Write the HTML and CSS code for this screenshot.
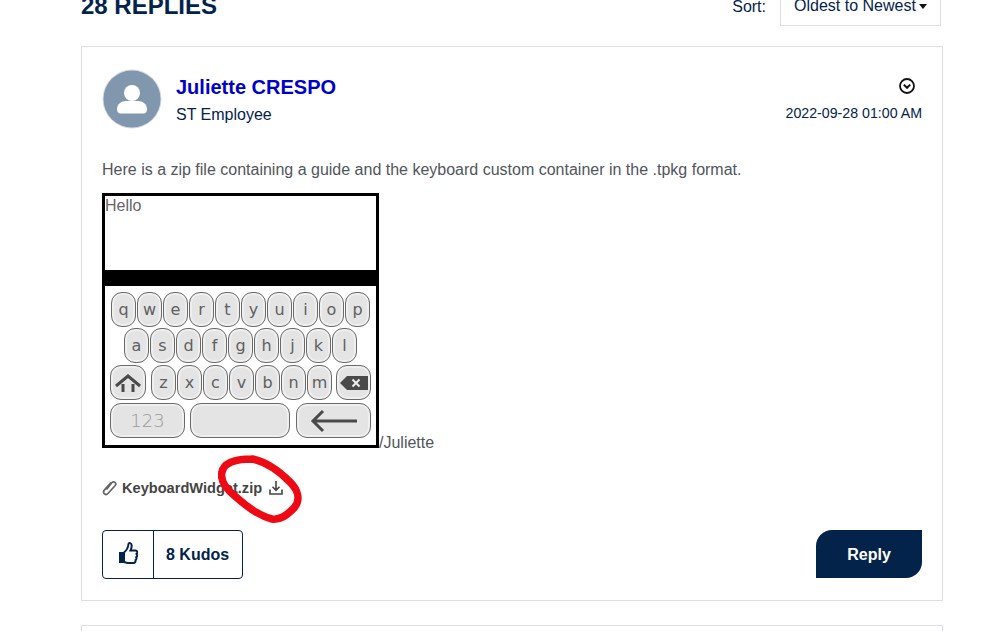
FILE: index.html
```html
<!DOCTYPE html>
<html lang="en">
<head>
    <meta charset="UTF-8">
    <title>28 Replies</title>
    <link rel="stylesheet" href="styles.css">
</head>
<body>
    <div class="page">
        <div class="replies-bar">
            <h2 class="replies-title">28 REPLIES</h2>
            <div class="sort">
                <span class="sort-label">Sort:</span>
                <div class="sort-select">Oldest to Newest<span class="caret"></span></div>
            </div>
        </div>

        <div class="post">
            <div class="post-head">
                <div class="avatar">
                    <svg width="60" height="60" viewBox="0 0 60 60">
                        <circle cx="30" cy="30" r="29.500" fill="#d5dbe2"/>
                        <circle cx="30" cy="30" r="28.500" fill="#8197ad"/>
                        <circle cx="30" cy="24" r="8" fill="#fff"/>
                        <path d="M15 40c0-5 4.500-8 9-8h12c4.500 0 9 3 9 8 0 3-1.500 4.500-3.500 4.500h-23C16.500 44.500 15 43 15 40z" fill="#fff"/>
                    </svg>
                </div>
                <div class="author">
                    <a class="author-name">Juliette CRESPO</a>
                    <div class="author-rank">ST Employee</div>
                </div>
                <div class="post-meta">
                    <svg class="menu-icon" width="16" height="16" viewBox="0 0 16 16" fill="none" stroke="#111" stroke-width="1.800">
                        <circle cx="8" cy="8" r="7"/>
                        <path d="M4.800 6.600 8 9.800l3.200-3.200" stroke-width="2"/>
                    </svg>
                    <div class="post-date">2022-09-28 01:00 AM</div>
                </div>
            </div>

            <p class="post-text">Here is a zip file containing a guide and the keyboard custom container in the .tpkg format.</p>

            <div class="post-shot">
                <div class="phone">
                    <div class="phone-input">Hello</div>
                    <div class="phone-band"></div>
                    <div class="keyboard">
                        <div class="key-row">
                            <span class="key">q</span><span class="key">w</span><span class="key">e</span><span class="key">r</span><span class="key">t</span><span class="key">y</span><span class="key">u</span><span class="key">i</span><span class="key">o</span><span class="key">p</span>
                        </div>
                        <div class="key-row row-a">
                            <span class="key">a</span><span class="key">s</span><span class="key">d</span><span class="key">f</span><span class="key">g</span><span class="key">h</span><span class="key">j</span><span class="key">k</span><span class="key">l</span>
                        </div>
                        <div class="key-row row-z">
                            <span class="key key-shift">
                                <svg width="28" height="20" viewBox="0 0 28 20" fill="none" stroke="#4a4a4a" stroke-width="3">
                                    <path d="M2 13 14 3l12 10M9 11v8M19 11v8"/>
                                </svg>
                            </span>
                            <span class="key">z</span><span class="key">x</span><span class="key">c</span><span class="key">v</span><span class="key">b</span><span class="key">n</span><span class="key">m</span>
                            <span class="key key-back">
                                <svg width="30" height="16" viewBox="0 0 30 16">
                                    <path d="M8 1h21v14H8L1 8z" fill="#4a4a4a"/>
                                    <path d="M13.500 4.500l7 7M20.500 4.500l-7 7" stroke="#eee" stroke-width="2"/>
                                </svg>
                            </span>
                        </div>
                        <div class="key-row row-bottom">
                            <span class="key key-num">123</span>
                            <span class="key key-space"></span>
                            <span class="key key-enter">
                                <svg width="48" height="24" viewBox="0 0 48 24" fill="none" stroke="#4a4a4a" stroke-width="3">
                                    <path d="M47 12H3M13 2 3 12l10 10"/>
                                </svg>
                            </span>
                        </div>
                    </div>
                </div>/Juliette
            </div>

            <div class="attachment">
                <svg width="15" height="16" viewBox="0 0 15 16" fill="none" stroke="#666" stroke-width="1.700">
                    <path d="M4.500 9.500 10 2.500c1.700-2 5 .6 3.200 3L6 13.500c-2.200 2.400-6-.5-3.700-3.400L9 2.500"/>
                </svg>
                <a class="attachment-name">KeyboardWidget.zip</a>
                <svg width="14" height="14" viewBox="0 0 14 14" fill="none" stroke="#444" stroke-width="1.600">
                    <path d="M7 0v9M3.500 5.800 7 9.300l3.500-3.500M1 8.500V13h12V8.500"/>
                </svg>
            </div>

            <div class="post-foot">
                <div class="kudos">
                    <div class="kudos-icon">
                        <svg width="20" height="24" viewBox="0 0 20 24">
                            <path d="M1 11h4.500v11H1z" fill="#03234b"/>
                            <path d="M6 11.500c2-1.500 4-4 4.500-8.500.2-1.500 3.200-1.300 3.200 1.500 0 1.500-.5 3.500-1.200 5h5c2 0 2.300 2.700 1 3.500 1 1 .7 2.700-.3 3.200.6 1 .2 2.500-.7 3 .3 1.300-.5 2.800-2 2.800H10c-1.500 0-2.500-.5-4-1z" fill="none" stroke="#03234b" stroke-width="2"/>
                        </svg>
                    </div>
                    <div class="kudos-count">8 Kudos</div>
                </div>
                <a class="btn-reply">Reply</a>
            </div>

            <svg class="scribble" width="90" height="72" viewBox="0 0 90 72" fill="none" stroke="#ee0a14" stroke-width="7.500" stroke-linecap="round">
                <path d="M34 5C50 8 62 18 72 28c8 8 11 18 4 26-8 8-14 12-22 11C42 62 28 52 18 43 8 35 2 26 4 18 6 8 18 5 34 5"/>
            </svg>
        </div>

        <div class="post post-next"></div>
    </div>
</body>
</html>
```

FILE: styles.css
```css
:root {
    --navy: #03234b;
    --text: #51565c;
    --line: #dcdee6;
}

* {
    margin: 0;
    padding: 0;
    box-sizing: border-box;
}

html, body {
    height: 631px;
    overflow: hidden;
}

body {
    font-family: 'Liberation Sans', Arial, sans-serif;
    background: #fff;
    color: var(--navy);
}

.page {
    width: 862px;
    margin: -14px 0 0 81px;
}

.replies-bar {
    display: flex;
    justify-content: space-between;
    height: 60px;
}

.replies-title {
    font-size: 24px;
    line-height: 40px;
    font-weight: 700;
}

.sort {
    display: flex;
    margin-right: 2px;
    height: 40px;
    font-size: 16px;
}

.sort-label {
    line-height: 41px;
    margin-right: 14px;
}

.sort-select {
    width: 161px;
    padding-left: 13px;
    line-height: 40px;
    border: 1px solid var(--line);
    border-top: none;
    white-space: nowrap;
}

.caret {
    display: inline-block;
    margin-left: 3px;
    vertical-align: 2px;
    border-top: 5px solid #111;
    border-left: 4.500px solid transparent;
    border-right: 4.500px solid transparent;
}

.post {
    position: relative;
    height: 555px;
    padding: 22px 20px 0;
    border: 1px solid var(--line);
}

.post-head {
    display: flex;
    align-items: flex-start;
    height: 60px;
}

.avatar {
    width: 60px;
    height: 60px;
    margin-right: 14px;
}

.author {
    flex: 1;
    padding-top: 6px;
}

.author-name {
    display: block;
    font-size: 20px;
    line-height: 24px;
    font-weight: 700;
    color: #0000cc;
}

.author-rank {
    margin-top: 6px;
    font-size: 16px;
    line-height: 20px;
}

.post-meta {
    display: flex;
    flex-direction: column;
    align-items: flex-end;
    padding-top: 9px;
}

.menu-icon {
    margin-right: 7px;
}

.post-date {
    margin-top: 10px;
    font-size: 14.200px;
    line-height: 18px;
}

.post-text {
    margin-top: 31px;
    font-size: 16px;
    line-height: 20px;
    color: var(--text);
}

.post-shot {
    margin-top: 13px;
    font-size: 16px;
    line-height: 18px;
    color: var(--text);
}

.phone {
    display: inline-block;
    overflow: hidden;
    width: 277px;
    height: 255px;
    border: 3px solid #000;
    background: #fff;
}

.phone-input {
    height: 74px;
    padding-top: 1px;
    font-size: 16px;
    line-height: 18px;
    color: #666;
}

.phone-band {
    height: 16px;
    background: #000;
}

.keyboard {
    padding: 6px 5px 0;
}

.key-row {
    display: flex;
    gap: 1px;
    height: 35px;
    margin-bottom: 1px;
    padding-left: 1px;
}

.row-a {
    padding-left: 14px;
}

.row-z {
    margin-top: 2px;
    padding-left: 0;
}

.row-bottom {
    gap: 5px;
    margin-top: 3px;
    padding-left: 0;
}

.key {
    display: flex;
    align-items: center;
    justify-content: center;
    width: 25px;
    height: 35px;
    border: 1px solid #6a6a6a;
    border-radius: 11px;
    background: #e4e4e4;
    box-shadow: inset 0 0 0 2px #efefef;
    font-family: 'DejaVu Sans', sans-serif;
    font-size: 16px;
    color: #606060;
}

.key-shift {
    width: 36px;
    margin-right: 4px;
}

.key-back {
    width: 35px;
    margin-left: 3px;
}

.key-num {
    width: 75px;
    font-size: 18px;
    font-weight: 200;
    color: #999;
}

.key-space {
    width: 100px;
}

.key-enter {
    width: 75px;
    margin-left: 1px;
}

.attachment {
    display: flex;
    align-items: center;
    gap: 5px;
    margin-top: 27px;
    height: 18px;
    color: #444;
}

.attachment-name {
    font-size: 14.600px;
    font-weight: 700;
    margin-right: 2px;
}

.post-foot {
    display: flex;
    justify-content: space-between;
    align-items: flex-start;
    margin-top: 33px;
}

.kudos {
    display: flex;
    width: 141px;
    height: 49px;
    border: 1px solid var(--navy);
    border-radius: 4px;
}

.kudos-icon {
    display: flex;
    align-items: center;
    justify-content: center;
    width: 51px;
    padding-bottom: 4px;
    border-right: 1px solid var(--navy);
}

.kudos-count {
    flex: 1;
    padding-left: 12px;
    font-size: 16px;
    font-weight: 700;
    line-height: 47px;
}

.btn-reply {
    width: 106px;
    height: 48px;
    background: var(--navy);
    border-radius: 16px 0 16px 0;
    color: #fff;
    font-size: 16px;
    font-weight: 700;
    line-height: 49px;
    text-align: center;
}

.scribble {
    position: absolute;
    left: 136px;
    top: 407px;
}

.post-next {
    margin-top: 24px;
    height: 6px;
    border-bottom: none;
}
```
